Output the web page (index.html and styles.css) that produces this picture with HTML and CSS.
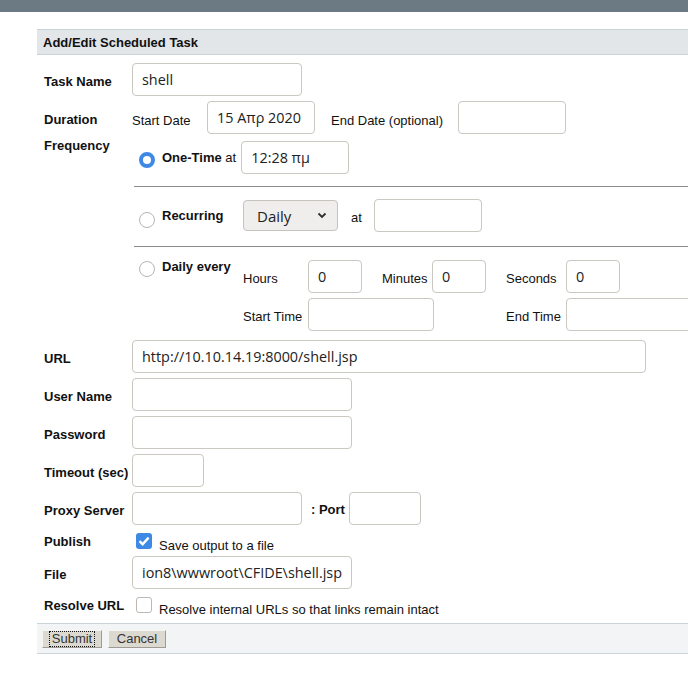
FILE: index.html
```html
<!DOCTYPE html>
<html>
<head>
<meta charset="utf-8">
<link rel="stylesheet" href="styles.css">
</head>
<body>
<div class="topbar"></div>
<div class="panel">
  <div class="panel-head">Add/Edit Scheduled Task</div>
  <div class="form">
    <div class="row">
      <div class="lbl">Task Name</div>
      <input class="inp w170" value="shell">
    </div>
    <div class="row">
      <div class="lbl">Duration</div>
      <span class="txt sd">Start Date</span>
      <input class="inp w108" value="15 Απρ 2020">
      <span class="txt ed">End Date (optional)</span>
      <input class="inp w108" value="">
    </div>
    <div class="row freq">
      <div class="lbl flbl">Frequency</div>
      <div class="freqbox">
        <div class="fopt opt-a">
          <span class="radio on"></span>
          <span class="b">One-Time</span><span class="txt">&nbsp;at</span>
          <input class="inp w108 ml5" value="12:28 πμ">
        </div>
        <div class="hrline hr1"></div>
        <div class="fopt opt-b">
          <span class="radio"></span>
          <span class="b optlbl">Recurring</span>
          <div class="selwrap">
            <select class="sel"><option>Daily</option></select>
            <svg class="chev" width="10" height="7" viewBox="0 0 10 7"><path d="M1.5 1.5 L5 5 L8.5 1.5" fill="none" stroke="#2e2e2e" stroke-width="1.8"/></svg>
          </div>
          <span class="txt at2">at</span>
          <input class="inp w108 ml12" value="">
        </div>
        <div class="hrline hr2"></div>
        <div class="fopt opt-c">
          <span class="radio"></span>
          <span class="b optlbl dlbl">Daily every</span>
          <div class="dgrid">
            <span class="txt">Hours</span>
            <input class="inp w54" value="0">
            <span class="txt">Minutes</span>
            <input class="inp w54" value="0">
            <span class="txt">Seconds</span>
            <input class="inp w54" value="0">
            <span class="txt">Start Time</span>
            <input class="inp w126 span3" value="">
            <span class="txt c5">End Time</span>
            <input class="inp w130" value="">
          </div>
        </div>
      </div>
    </div>
    <div class="row">
      <div class="lbl">URL</div>
      <input class="inp w514" value="http://10.10.14.19:8000/shell.jsp">
    </div>
    <div class="row">
      <div class="lbl">User Name</div>
      <input class="inp w220" value="">
    </div>
    <div class="row">
      <div class="lbl">Password</div>
      <input class="inp w220" type="password" value="">
    </div>
    <div class="row">
      <div class="lbl">Timeout (sec)</div>
      <input class="inp w72" value="">
    </div>
    <div class="row">
      <div class="lbl">Proxy Server</div>
      <input class="inp w170" value="">
      <span class="b port">: Port</span>
      <input class="inp w72" value="">
    </div>
    <div class="row chk">
      <div class="lbl">Publish</div>
      <span class="cbox on"><svg width="16" height="16" viewBox="0 0 16 16"><path d="M3.5 8.2 L6.6 11.2 L12.6 4.6" fill="none" stroke="#fff" stroke-width="2.4"/></svg></span>
      <span class="txt ctxt">Save output to a file</span>
    </div>
    <div class="row">
      <div class="lbl">File</div>
      <input class="inp w220" value="ion8\wwwroot\CFIDE\shell.jsp">
    </div>
    <div class="row chk">
      <div class="lbl">Resolve URL</div>
      <span class="cbox"></span>
      <span class="txt ctxt">Resolve internal URLs so that links remain intact</span>
    </div>
  </div>
  <div class="panel-foot">
    <button class="btn bsub"><span class="focus">Submit</span></button>
    <button class="btn bcan">Cancel</button>
  </div>
</div>
</body>
</html>
```

FILE: styles.css
```css
html, body {
  margin: 0;
  padding: 0;
  overflow: hidden;
  background: #fff;
}
body {
  width: 688px;
  height: 684px;
  font-family: "Liberation Sans", Arial, sans-serif;
  font-size: 13px;
  color: #111;
}
.topbar {
  height: 12px;
  background: #6c7a83;
}
.panel {
  margin: 17px 0 0 37px;
  width: 720px;
}
.panel-head {
  height: 24px;
  line-height: 25px;
  background: #e2e6e8;
  border-top: 1px solid #cad4d9;
  border-bottom: 1px solid #cad4d9;
  padding-left: 6px;
  font-weight: bold;
}
.form {
  display: flex;
  flex-direction: column;
  gap: 5px;
  padding: 8px 0 8px 7px;
}
.row {
  display: flex;
  align-items: center;
}
.lbl {
  width: 88px;
  flex: none;
  font-weight: bold;
  line-height: 15px;
  padding-top: 3px;
}
.txt {
  line-height: 15px;
  white-space: nowrap;
  padding-top: 3px;
}
.b {
  font-weight: bold;
  line-height: 15px;
  white-space: nowrap;
}
.inp {
  box-sizing: border-box;
  height: 33px;
  border: 1px solid #cbc7c1;
  border-radius: 4px;
  padding: 0 8px 0 9px;
  margin: 0;
  font-family: "Open Sans", "Noto Sans", sans-serif;
  font-size: 14.4px;
  color: #222;
  background: #fff;
  outline: none;
  flex: none;
}
.w54 { width: 54px; }
.w72 { width: 72px; }
.w108 { width: 108px; }
.w126 { width: 126px; }
.w130 { width: 130px; }
.w170 { width: 170px; }
.w220 { width: 220px; }
.w514 { width: 514px; }
.ml5 { margin-left: 5px; }
.ml12 { margin-left: 12px; }
.sd { width: 75px; padding-top: 5px; }
.ed { width: 127px; margin-left: 16px; padding-top: 5px; }

.freq { align-items: flex-start; }
.flbl { padding-top: 0; margin-top: -1px; }
.freqbox {
  flex: 1;
  padding: 2px 0 4px 0;
}
.fopt {
  display: flex;
  align-items: center;
  padding-left: 7px;
}
.opt-a .txt { padding-top: 0; }
.hrline {
  height: 1px;
  background: #8b8b8b;
  margin-left: 2px;
}
.hr1 { margin-top: 12px; margin-bottom: 12px; }
.hr2 { margin-top: 14px; margin-bottom: 13px; }
.radio {
  flex: none;
  box-sizing: border-box;
  width: 16px;
  height: 16px;
  border-radius: 50%;
  border: 1px solid #b9b4ae;
  background: #fff;
  margin-right: 7px;
}
.radio.on {
  border: 4.5px solid #3d89e5;
}
.opt-a .radio { margin-top: 4px; }
.opt-b .radio { margin-top: 9px; }
.opt-c { align-items: flex-start; }
.opt-c .radio { margin-top: 1px; }
.optlbl { width: 81px; flex: none; }
.dlbl { margin-top: -1px; }
.selwrap {
  position: relative;
  flex: none;
  width: 95px;
  height: 31px;
}
.sel {
  appearance: none;
  -webkit-appearance: none;
  box-sizing: border-box;
  width: 95px;
  height: 31px;
  margin: 0;
  border: 1px solid #c6c2bc;
  border-radius: 4px;
  background: #efeeec;
  padding: 0 0 0 13px;
  font-family: "Open Sans", "Noto Sans", sans-serif;
  font-size: 15px;
  color: #222;
  outline: none;
}
.chev {
  position: absolute;
  left: 74px;
  top: 12px;
}
.at2 { margin-left: 13px; }
.dgrid {
  display: grid;
  grid-template-columns: 65px 74px 50px 74px 60px auto;
  row-gap: 5px;
  align-items: center;
}
.span3 { grid-column: 2 / span 3; }
.c5 { grid-column: 5; }

.port { margin-left: 9px; width: 38px; padding-top: 1px; }

.chk {
  height: 21px;
  align-items: flex-start;
}
.chk .lbl { padding-top: 4px; }
.cbox {
  flex: none;
  box-sizing: border-box;
  width: 16px;
  height: 16px;
  border-radius: 3px;
  border: 1px solid #bdb8b2;
  background: #fff;
  margin: 3px 0 0 4px;
  position: relative;
}
.cbox.on {
  border: none;
  background: #3d89e5;
}
.cbox svg { display: block; }
.ctxt { margin-left: 7px; padding-top: 8px; }

.panel-foot {
  box-sizing: border-box;
  height: 31px;
  background: #f2f4f5;
  border-top: 1px solid #cad4d9;
  border-bottom: 1px solid #cad4d9;
  display: flex;
  align-items: flex-start;
  gap: 6px;
  padding: 6px 0 0 5px;
}
.btn {
  box-sizing: border-box;
  height: 18px;
  margin: 0;
  padding: 0;
  font-family: "Liberation Sans", Arial, sans-serif;
  font-size: 13px;
  line-height: 14px;
  color: #333;
  background: #dcd9d1;
  border: 1px solid;
  border-color: #f5f4f0 #9e9b94 #9e9b94 #f5f4f0;
  border-radius: 0;
}
.bsub { width: 60px; }
.bcan { width: 58px; }
.focus {
  display: inline-block;
  outline: 1px dotted #111;
  padding: 0 2px;
  line-height: 14px;
}
```
